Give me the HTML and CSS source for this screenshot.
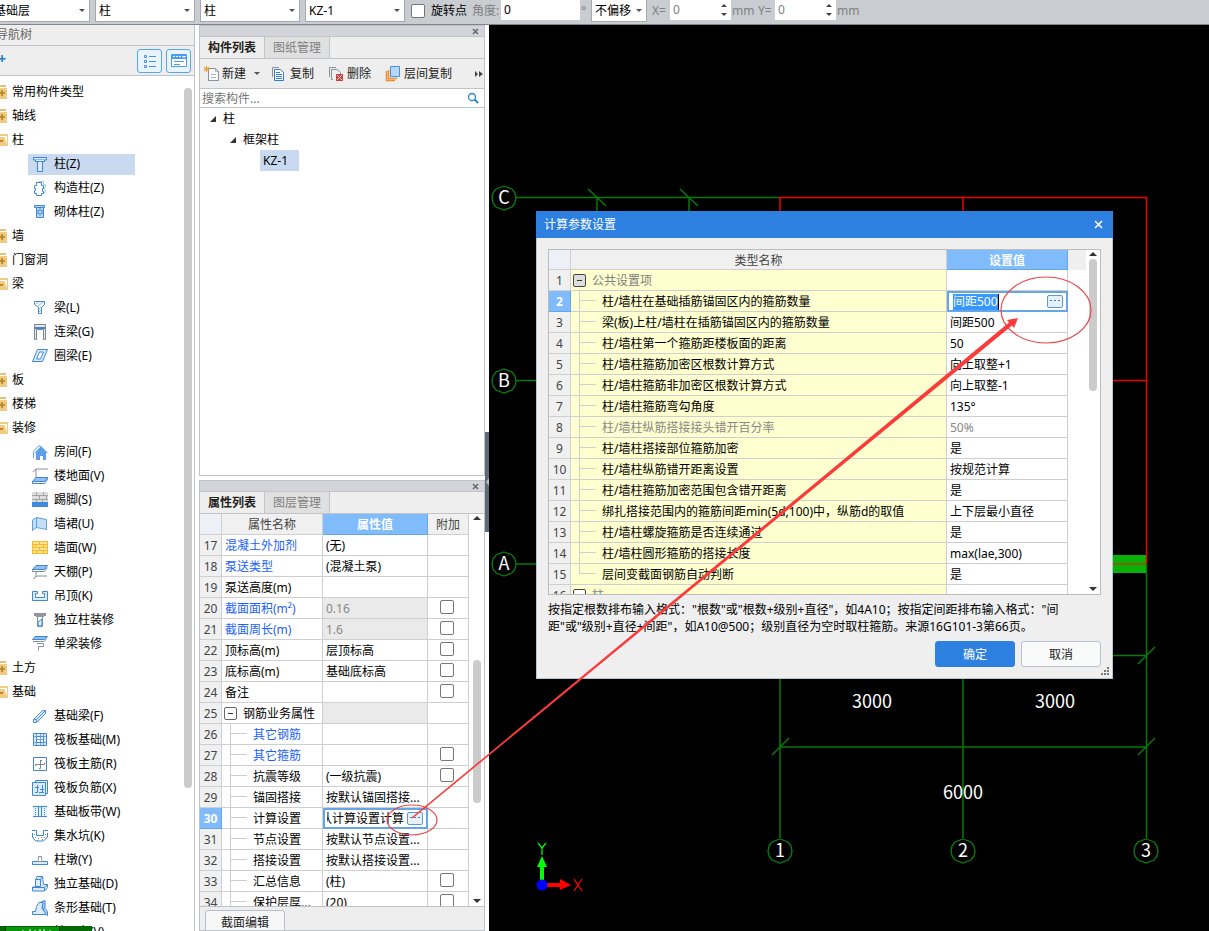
FILE: index.html
```html
<!DOCTYPE html>
<html lang="zh-CN">
<head>
<meta charset="utf-8">
<title>计算参数设置</title>
<link rel="stylesheet" href="styles.css">
</head>
<body>
<svg class="defs" aria-hidden="true">
  <symbol id="folder" viewBox="0 0 16 16"><path d="M1 1h13v2H1z" fill="#e8c078"/><path d="M1 4h14v11H1z" fill="#f0cb80"/><path d="M10 6v6M7 9h6" stroke="#bb8c35" stroke-width="2"/></symbol>
  <symbol id="folder-open" viewBox="0 0 16 16"><path d="M1 2h15v12H1z" fill="#f0cb80"/><path d="M8 4h7v8L12.500 5H8z" fill="#fff"/><path d="M8 9h3" stroke="#bb8c35" stroke-width="2"/></symbol>
  <symbol id="i-col" viewBox="0 0 16 16"><g fill="#dcebfb" stroke="#3f86d4"><path d="M1.500 1.500h13v2.500h-13z"/><path d="M3.500 4v1.500h9V4"/><path d="M5.500 5.500h5v10h-5z"/></g></symbol>
  <symbol id="i-gz" viewBox="0 0 16 16"><path d="M6.500 1.500h5v3h2v3h-1v3h1v2h-3" fill="none" stroke="#a9c9ec"/><path d="M4.500 2.500h5v3h2v3h-1v3h1v2h-2v2h-5v-2h-2v-3h1v-2h-1v-3h2z" fill="#fff" stroke="#3f86d4"/></symbol>
  <symbol id="i-qt" viewBox="0 0 16 16"><path d="M2.500 1.500h10v2h-10z" fill="#b9d7f5" stroke="#3f86d4"/><path d="M4.500 3.500h7v10h-7z" fill="#b9d7f5" stroke="#3f86d4"/><path d="M5 6.500h6M5 9.500h6M8 4v2M6 7v2M10 7v2M8 10v2" stroke="#5f9ddd"/></symbol>
  <symbol id="i-beam" viewBox="0 0 16 16"><path d="M2.500 1.500h10v3l-3 3v6h-3v-6l-4-3z" fill="#fff" stroke="#3f86d4"/><path d="M4 4l3-2M6 6l5-4M7 9l2-2M7 12l2-2" stroke="#8db8e6"/></symbol>
  <symbol id="i-link" viewBox="0 0 16 16"><path d="M2.500.5h11v15h-2V5.500h-7v10h-2z" fill="#e4e7ea" stroke="#7d868e"/><path d="M3 3h10v2H3z" fill="#3f86d4"/></symbol>
  <symbol id="i-ring" viewBox="0 0 16 16"><path d="M5.500 1.500h10l-5 12H.5zM7.500 4h4l-3 7h-4z" fill="#dcebfb" fill-rule="evenodd" stroke="#3f86d4"/></symbol>
  <symbol id="i-house" viewBox="0 0 16 16"><path d="M1.500 14V7.500L7 1.500l2 1" fill="none" stroke="#62a2ea"/><path d="M9 2l7 7h-2v7h-3v-4H8v4H4V9H2.500z" fill="#5e9fea"/></symbol>
  <symbol id="i-floor" viewBox="0 0 16 16"><path d="M1 4l3-3h12M4 1v9" fill="none" stroke="#85909a"/><path d="M4 9.500h11.500l-3 4H.5z" fill="#8fbff5" stroke="#3f86d4"/><path d="M.5 13.500v2h12l3-4v-2" fill="none" stroke="#3f86d4"/></symbol>
  <symbol id="i-skirt" viewBox="0 0 16 16"><path d="M0 0h16v10H0z" fill="#dddddf"/><path d="M0 3.500h16M0 7.500h16M4.500 0v3M11.500 0v3M7.500 4v3M14.500 4v3M4.500 8v2M10.500 8v2" stroke="#a3a5a9"/><path d="M0 10h16v5H0z" fill="#3e8adb"/></symbol>
  <symbol id="i-dado" viewBox="0 0 16 16"><path d="M4.500 1.500l10 2v10l-10-2-4 3V4z" fill="#c4def8" stroke="#5e9de2"/><path d="M4.500 1.500v10" stroke="#5e9de2"/></symbol>
  <symbol id="i-wall" viewBox="0 0 16 16"><path d="M0 1h16v13H0z" fill="#ffb81f"/><path d="M1 2h6v2H1zM8 2h7v2H8zM1 5h2v2H1zM4 5h7v2H4zM12 5h3v2h-3zM1 8h6v2H1zM8 8h7v2H8zM1 11h3v2H1zM5 11h6v2H5zM12 11h3v2h-3z" fill="#ffe49c"/></symbol>
  <symbol id="i-ceil" viewBox="0 0 16 16"><path d="M4 1.500h11.500l-3 4H.5z" fill="#8fbff5" stroke="#3f86d4"/><path d="M.5 5.500v2h12l3-4M1 15l4-3h10M4 7v6" fill="none" stroke="#85909a"/></symbol>
  <symbol id="i-susp" viewBox="0 0 16 16"><path d="M.5 3.500h5v2h-2v4h9v-4h-2v-2h5v9H.5z" fill="#dcebfb" stroke="#3f86d4"/></symbol>
  <symbol id="i-cdec" viewBox="0 0 16 16"><path d="M2 1h12v3H2zM4 4h8v1H4z" fill="#8e979f"/><path d="M5.500 5v9.500h5V5" fill="#fff" stroke="#85909a"/><path d="M6 10l4-3v7H6z" fill="#e2effc" stroke="#3f86d4"/></symbol>
  <symbol id="i-bdec" viewBox="0 0 16 16"><path d="M3 .5h12.500l-3 3H.5z" fill="#8fbff5" stroke="#3f86d4"/><path d="M1 5.500h11l3-3M5 7.500h6.500v3h-5v4" fill="none" stroke="#85909a"/></symbol>
  <symbol id="i-fbeam" viewBox="0 0 16 16"><path d="M1.500 11.500l9-9h3v3l-9 9h-3zM1.500 11.500h3v3M4.500 11.500l9-9" fill="#dcebfb" stroke="#4b8fdc"/></symbol>
  <symbol id="i-raft" viewBox="0 0 16 16"><path d="M1.500 1.500h13v12h-13z" fill="#dcebfb" stroke="#3f86d4"/><path d="M4.500 4.500h7v6h-7z" fill="#fff" stroke="#3f86d4"/><path d="M4.500 2v2M8.500 2v8M11.500 2v2M4.500 11v2M8.500 11v2M11.500 11v2M2 4.500h2M2 10.500h2M12 4.500h2M12 10.500h2M5 7.500h6" stroke="#6aa3e0"/></symbol>
  <symbol id="i-main" viewBox="0 0 16 16"><path d="M1.500 1.500h13v13h-13z" fill="#fff" stroke="#3f86d4"/><path d="M3.500 10V8.500h9V7M8.500 4v8.500H7M8.500 4.500H10" fill="none" stroke="#7d868e"/></symbol>
  <symbol id="i-neg" viewBox="0 0 16 16"><path d="M3.500 2.500v-2h12v13h-2M.5 2.500h13v13H.5z" fill="#dcebfb" stroke="#3f86d4"/><path d="M3 7.500h4M5.500 5v7.500H3M8 9.500h4M10.500 5v7.500M7 12.500h5" fill="none" stroke="#3f86d4"/></symbol>
  <symbol id="i-strip" viewBox="0 0 16 16"><path d="M1 2h14v11H1z" fill="#e2effc"/><path d="M1 2.500h14M1 12.500h14M6.500 2v11M9.500 2v11" stroke="#3f86d4"/><path d="M3.500 4v8M12.500 4v8" stroke="#3f86d4" stroke-dasharray="1 1"/></symbol>
  <symbol id="i-pit" viewBox="0 0 16 16"><path d="M0 2.500h4.500v5h7v-5H16M.5 5v4l3 4h8l4-4V5" fill="none" stroke="#3f86d4"/><path d="M2 6.500h1M3 9.500h1M6 10.500h1M9 9.500h1M12 9.500h1M13 6.500h1M5 12.500h1M10 11.500h1" stroke="#7d868e"/></symbol>
  <symbol id="i-pier" viewBox="0 0 16 16"><path d="M.5 9.500h15v3H.5z" fill="#dcebfb" stroke="#3f86d4"/><path d="M5.500 9.500l1-2v-3h3v3l1 2z" fill="#fff" stroke="#85909a"/></symbol>
  <symbol id="i-indf" viewBox="0 0 16 16"><path d="M5 .500h5.500l1 8h4v3l-3 3.500H.5v-4h3v-7z" fill="#dcebfb" stroke="#3f86d4"/><path d="M3.500 3.500h5v7h-5zM.5 11.500h12v3M12.500 11.500l3-3M8.500 3.500l2-3" fill="none" stroke="#3f86d4"/></symbol>
  <symbol id="i-strf" viewBox="0 0 16 16"><path d="M9 2l4-1.500v8l2.500 3v4l-3-2z" fill="#a9cdf3" stroke="#3f86d4"/><path d="M4.500 6.500L7 2.500h4l-1 6 3 4v2H.5v-3h3z" fill="#dcebfb" stroke="#3f86d4"/></symbol>
  <symbol id="i-pile" viewBox="0 0 16 16"><path d="M3.500 6.500l4-4 4 4v4h-8z" fill="#dcebfb" stroke="#3f86d4"/></symbol>
</svg>

<header class="bar">
  <span class="pick first"><select aria-label="楼层"><option>基础层</option></select></span>
  <span class="pick"><select aria-label="分类"><option>柱</option></select></span>
  <span class="pick"><select aria-label="构件类型"><option>柱</option></select></span>
  <span class="pick"><select aria-label="构件"><option>KZ-1</option></select></span>
  <label class="rot"><input type="checkbox" class="check">旋转点</label>
  <label class="fade la" for="angle">角度:</label><input id="angle" class="angle" value="0"><span class="fade deg">°</span>
  <span class="pick small"><select aria-label="偏移"><option>不偏移</option></select></span>
  <label class="fade lx" for="dx">X=</label><span class="spin"><input id="dx" value="0"></span><span class="fade unit">mm</span>
  <label class="fade ly" for="dy">Y=</label><span class="spin"><input id="dy" value="0"></span><span class="fade unit">mm</span>
</header>

<main class="main">
  <nav class="nav">
    <h2 class="nav-title">导航树</h2>
    <div class="nav-tools">
      <span class="plus">+</span>
      <button aria-label="列表"><svg width="16" height="16" fill="none" stroke="#4a90e2"><path d="M2.500 2.500h2v2h-2zM2.500 7.500h2v2h-2zM2.500 12.500h2v2h-2zM7 3.500h7M7 8.500h7M7 13.500h7"/></svg></button>
      <button aria-label="窗口"><svg width="16" height="16"><path d="M.5 1.500h15v12H.5z" fill="#fff" stroke="#4a9cf3"/><path d="M1 2h14v4H1z" fill="#4a9cf3"/><path d="M2 3.500h2M5 3.500h2M8 3.500h2" stroke="#fff"/><path d="M11 3h4l-2 2z" fill="#fff"/><path d="M3 8.500h10M3 11.500h6" stroke="#4a9cf3"/></svg></button>
    </div>
    <div class="nav-body">
      <ul class="tree">
        <li class="g"><svg><use href="#folder"/></svg>常用构件类型</li>
        <li class="g"><svg><use href="#folder"/></svg>轴线</li>
        <li class="g"><svg><use href="#folder-open"/></svg>柱</li>
        <li class="sel"><span><svg><use href="#i-col"/></svg>柱(Z)</span></li>
        <li><svg><use href="#i-gz"/></svg>构造柱(Z)</li>
        <li><svg><use href="#i-qt"/></svg>砌体柱(Z)</li>
        <li class="g"><svg><use href="#folder"/></svg>墙</li>
        <li class="g"><svg><use href="#folder"/></svg>门窗洞</li>
        <li class="g"><svg><use href="#folder-open"/></svg>梁</li>
        <li><svg><use href="#i-beam"/></svg>梁(L)</li>
        <li><svg><use href="#i-link"/></svg>连梁(G)</li>
        <li><svg><use href="#i-ring"/></svg>圈梁(E)</li>
        <li class="g"><svg><use href="#folder"/></svg>板</li>
        <li class="g"><svg><use href="#folder"/></svg>楼梯</li>
        <li class="g"><svg><use href="#folder-open"/></svg>装修</li>
        <li><svg><use href="#i-house"/></svg>房间(F)</li>
        <li><svg><use href="#i-floor"/></svg>楼地面(V)</li>
        <li><svg><use href="#i-skirt"/></svg>踢脚(S)</li>
        <li><svg><use href="#i-dado"/></svg>墙裙(U)</li>
        <li><svg><use href="#i-wall"/></svg>墙面(W)</li>
        <li><svg><use href="#i-ceil"/></svg>天棚(P)</li>
        <li><svg><use href="#i-susp"/></svg>吊顶(K)</li>
        <li><svg><use href="#i-cdec"/></svg>独立柱装修</li>
        <li><svg><use href="#i-bdec"/></svg>单梁装修</li>
        <li class="g"><svg><use href="#folder"/></svg>土方</li>
        <li class="g"><svg><use href="#folder-open"/></svg>基础</li>
        <li><svg><use href="#i-fbeam"/></svg>基础梁(F)</li>
        <li><svg><use href="#i-raft"/></svg>筏板基础(M)</li>
        <li><svg><use href="#i-main"/></svg>筏板主筋(R)</li>
        <li><svg><use href="#i-neg"/></svg>筏板负筋(X)</li>
        <li><svg><use href="#i-strip"/></svg>基础板带(W)</li>
        <li><svg><use href="#i-pit"/></svg>集水坑(K)</li>
        <li><svg><use href="#i-pier"/></svg>柱墩(Y)</li>
        <li><svg><use href="#i-indf"/></svg>独立基础(D)</li>
        <li><svg><use href="#i-strf"/></svg>条形基础(T)</li>
        <li><svg><use href="#i-pile"/></svg>桩承台(V)</li>
      </ul>
      <div class="nav-scroll"><i></i></div>
    </div>
    <svg class="meter" width="92" height="5"><path d="M0 0h92v5H0z" fill="#046804"/><path d="M6 1h53v4H6z" fill="#0a960a"/><path d="M5.500 0v5M59.500 0v5" stroke="#023a02"/><path d="M23 4v1M30 3v2M35 4v1M40 3v2M44 3v2M50 4v1" stroke="#e8ffe8"/></svg>
  </nav>

  <section class="dock">
    <div class="panel">
      <div class="grip"><button class="x" aria-label="关闭"><svg width="7" height="7"><path d="M1 1l5 5M6 1L1 6" stroke="#666" stroke-width="1.500"/></svg></button></div>
      <div class="tabs"><button class="on">构件列表</button><button>图纸管理</button></div>
      <div class="tools">
        <button class="new"><svg width="16" height="16"><path d="M4.500 2.500h7l3 3v9h-10z" fill="#f6f8fa" stroke="#87919b"/><path d="M11.500 2.500v3h3M7 8.500h5M7 11.500h5" fill="none" stroke="#a9b1b8"/><path d="M0 1l5 4M5 1L0 5M2.500 0v6M0 3h6" stroke="#f29a2e"/></svg>新建<i class="down"></i></button>
        <button class="copy"><svg width="16" height="16"><path d="M1.500 11V1.500H8" fill="none" stroke="#87919b"/><path d="M3.500 3.500h6l3 3v8h-9z" fill="#fff" stroke="#2e7bd1"/><path d="M5 6.500h4M5 8.500h6M5 10.500h6M5 12.500h6" stroke="#2e7bd1"/></svg>复制</button>
        <button class="del"><svg width="16" height="16"><path d="M1.500 11V1.500H8M5 13.500H3.500v-10h6l3 3V8" fill="none" stroke="#87919b"/><path d="M8 8h7v7H8z" fill="#c94040"/><path d="M9 9l5 5M14 9l-5 5" stroke="#f3d0d0"/></svg>删除</button>
        <button class="lay"><svg width="16" height="16"><path d="M1.500 5v9.500H10M3.500 4v8.500H12" fill="none" stroke="#f08a2c" stroke-width="1.500"/><path d="M5.500.5h9v10h-9z" fill="#b5d7fb" stroke="#4a90e2"/></svg>层间复制</button>
        <svg class="more" width="8" height="6"><path d="M0 0l3 3-3 3zM4 0l4 3-4 3z" fill="#444"/></svg>
      </div>
      <div class="search"><input aria-label="搜索构件" placeholder="搜索构件..."><svg width="12" height="12"><circle cx="5" cy="5" r="3.500" fill="none" stroke="#2b86c5" stroke-width="1.300"/><path d="M7.500 7.500l3.500 3.500" stroke="#2b86c5" stroke-width="2"/></svg></div>
      <ul class="parts">
        <li class="l1"><i></i>柱</li>
        <li class="l2"><i></i>框架柱</li>
        <li class="l3"><span>KZ-1</span></li>
      </ul>
    </div>

    <div class="panel props">
      <div class="grip"><button class="x" aria-label="关闭"><svg width="7" height="7"><path d="M1 1l5 5M6 1L1 6" stroke="#666" stroke-width="1.500"/></svg></button></div>
      <div class="tabs"><button class="on">属性列表</button><button>图层管理</button></div>
      <div class="grid">
        <table class="tbl">
          <colgroup><col class="c-n"><col class="c-name"><col class="c-val"><col class="c-add"></colgroup>
          <thead><tr><th class="corner"></th><th>属性名称</th><th class="hot">属性值</th><th>附加</th></tr></thead>
          <tbody>
            <tr><th>17</th><td class="blue">混凝土外加剂</td><td>(无)</td><td></td></tr>
            <tr><th>18</th><td class="blue">泵送类型</td><td>(混凝土泵)</td><td></td></tr>
            <tr><th>19</th><td>泵送高度(m)</td><td></td><td></td></tr>
            <tr><th>20</th><td class="blue">截面面积(m²)</td><td class="off">0.16</td><td class="ck"><input type="checkbox" class="check" aria-label="附加"></td></tr>
            <tr><th>21</th><td class="blue">截面周长(m)</td><td class="off">1.6</td><td class="ck"><input type="checkbox" class="check" aria-label="附加"></td></tr>
            <tr><th>22</th><td>顶标高(m)</td><td>层顶标高</td><td class="ck"><input type="checkbox" class="check" aria-label="附加"></td></tr>
            <tr><th>23</th><td>底标高(m)</td><td>基础底标高</td><td class="ck"><input type="checkbox" class="check" aria-label="附加"></td></tr>
            <tr><th>24</th><td>备注</td><td></td><td class="ck"><input type="checkbox" class="check" aria-label="附加"></td></tr>
            <tr><th>25</th><td class="grp"><button class="fold" aria-label="折叠"></button>钢筋业务属性</td><td class="off"></td><td></td></tr>
            <tr><th>26</th><td class="kid blue">其它钢筋</td><td></td><td></td></tr>
            <tr><th>27</th><td class="kid blue">其它箍筋</td><td></td><td class="ck"><input type="checkbox" class="check" aria-label="附加"></td></tr>
            <tr><th>28</th><td class="kid">抗震等级</td><td>(一级抗震)</td><td class="ck"><input type="checkbox" class="check" aria-label="附加"></td></tr>
            <tr><th>29</th><td class="kid">锚固搭接</td><td>按默认锚固搭接...</td><td></td></tr>
            <tr><th class="hot">30</th><td class="kid">计算设置</td><td class="edit"><div><input class="tail" aria-label="计算设置" value="按默认计算设置计算"><button class="dots" aria-label="更多"></button></div></td><td></td></tr>
            <tr><th>31</th><td class="kid">节点设置</td><td>按默认节点设置...</td><td></td></tr>
            <tr><th>32</th><td class="kid">搭接设置</td><td>按默认搭接设置...</td><td></td></tr>
            <tr><th>33</th><td class="kid">汇总信息</td><td>(柱)</td><td class="ck"><input type="checkbox" class="check" aria-label="附加"></td></tr>
            <tr><th>34</th><td class="kid">保护层厚...</td><td>(20)</td><td class="ck"><input type="checkbox" class="check" aria-label="附加"></td></tr>
          </tbody>
        </table>
        <div class="scroll"><b class="up"></b><i></i><b class="dn"></b></div>
      </div>
      <div class="foot"><button>截面编辑</button></div>
    </div>
  </section>

  <div class="split"><svg width="4" height="100"><path d="M0 0h4v100H0z" fill="#5f6a77"/><path d="M4 46v8L1 50z" fill="#b8c0c8"/></svg></div>

  <section class="canvas">
    <svg class="cad" width="720" height="906" viewBox="489 25 720 906">
      <g fill="none" stroke="#067a06" stroke-width="1.500">
        <path d="M516 197.500H780M597 197v16M689 197v16M516 380.500h22M516 564h22M780 678v160M963 678v160M1146.500 564v274M1112 655.500h34M780 747h366M588 189l18 17M680 189l18 17M772 755l17-17M1138 755l17-17M1138 664l17-17"/>
      </g>
      <path d="M1112 555h34v18h-34z" fill="#08b008"/>
      <path d="M1112 564h34" stroke="#a34a0c" stroke-width="1.500"/>
      <path d="M780 213v-15.500h366.500V564M963 197v16M1112 380.500h34" fill="none" stroke="#f00000" stroke-width="1.500"/>
      <g fill="none" stroke="#0a7d0a" stroke-width="1.300">
        <path id="ring" d="M504 186l8 3 3 4 1 5-1 5-3 4-8 3-8-3-3-4-1-5 1-5 3-4z"/>
        <use href="#ring" y="183"/><use href="#ring" y="366"/>
        <use href="#ring" x="276" y="653"/><use href="#ring" x="459" y="653"/><use href="#ring" x="642" y="653"/>
      </g>
      <g class="dims">
        <text x="504" y="204">C</text><text x="504" y="387">B</text><text x="504" y="570">A</text>
        <text x="780" y="857">1</text><text x="963" y="857">2</text><text x="1146" y="857">3</text>
        <text x="872" y="708">3000</text><text x="1055" y="708">3000</text><text x="963" y="799">6000</text>
      </g>
      <path d="M540 881v-14h-3l5-11 5 11h-3v14z" fill="#0f0"/>
      <path d="M546 883h14v-4l11 6-11 5v-3h-14z" fill="#f00"/>
      <circle cx="542" cy="885" r="5.500" fill="#00f"/>
      <path d="M538 843l4 5 4-5M542 848v7" fill="none" stroke="#0f0" stroke-width="1.300"/>
      <path d="M574 879l8 12M582 879l-8 12" stroke="#f00" stroke-width="1.300"/>
    </svg>

    <div class="dialog" role="dialog" aria-labelledby="dlg-title">
      <div class="dlg-head"><h1 id="dlg-title">计算参数设置</h1><button aria-label="关闭"><svg width="9" height="9"><path d="M1 1l7 7M8 1L1 8" stroke="#fff" stroke-width="1.600"/></svg></button></div>
      <div class="dlg-body">
        <div class="frame">
          <table class="tbl calc">
            <colgroup><col class="c-n"><col><col class="c-set"></colgroup>
            <thead><tr><th class="corner"></th><th>类型名称</th><th class="hot">设置值</th></tr></thead>
            <tbody>
              <tr><th>1</th><td class="grp"><button class="fold" aria-label="折叠"></button>公共设置项</td><td></td></tr>
              <tr><th class="hot">2</th><td class="kid">柱/墙柱在基础插筋锚固区内的箍筋数量</td><td class="edit"><div><input class="marked" aria-label="设置值" value="间距500"><button class="dots" aria-label="更多"></button></div></td></tr>
              <tr><th>3</th><td class="kid">梁(板)上柱/墙柱在插筋锚固区内的箍筋数量</td><td>间距500</td></tr>
              <tr><th>4</th><td class="kid">柱/墙柱第一个箍筋距楼板面的距离</td><td>50</td></tr>
              <tr><th>5</th><td class="kid">柱/墙柱箍筋加密区根数计算方式</td><td>向上取整+1</td></tr>
              <tr><th>6</th><td class="kid">柱/墙柱箍筋非加密区根数计算方式</td><td>向上取整-1</td></tr>
              <tr><th>7</th><td class="kid">柱/墙柱箍筋弯勾角度</td><td>135°</td></tr>
              <tr class="dim"><th>8</th><td class="kid">柱/墙柱纵筋搭接接头错开百分率</td><td>50%</td></tr>
              <tr><th>9</th><td class="kid">柱/墙柱搭接部位箍筋加密</td><td>是</td></tr>
              <tr><th>10</th><td class="kid">柱/墙柱纵筋错开距离设置</td><td>按规范计算</td></tr>
              <tr><th>11</th><td class="kid">柱/墙柱箍筋加密范围包含错开距离</td><td>是</td></tr>
              <tr><th>12</th><td class="kid">绑扎搭接范围内的箍筋间距min(5d,100)中，纵筋d的取值</td><td>上下层最小直径</td></tr>
              <tr><th>13</th><td class="kid">柱/墙柱螺旋箍筋是否连续通过</td><td>是</td></tr>
              <tr><th>14</th><td class="kid">柱/墙柱圆形箍筋的搭接长度</td><td>max(lae,300)</td></tr>
              <tr><th>15</th><td class="kid last">层间变截面钢筋自动判断</td><td>是</td></tr>
              <tr><th>16</th><td class="grp"><button class="fold plain" aria-label="折叠"></button>柱</td><td></td></tr>
            </tbody>
          </table>
          <div class="pad"></div>
          <div class="scroll"><b class="up"></b><i></i><b class="dn"></b></div>
        </div>
        <p class="hint">按指定根数排布输入格式："根数"或"根数+级别+直径"，如4A10；按指定间距排布输入格式："间<br>距"或"级别+直径+间距"，如A10@500；级别直径为空时取柱箍筋。来源16G101-3第66页。</p>
        <div class="acts"><button class="ok">确定</button><button>取消</button></div>
      </div>
      <svg class="size" width="9" height="9"><path d="M6 0h2v2H6zM3 3h2v2H3zM6 3h2v2H6zM0 6h2v2H0zM3 6h2v2H3zM6 6h2v2H6z" fill="#777"/></svg>
    </div>
  </section>
</main>

<svg class="ink" width="1209" height="931" aria-hidden="true">
  <g fill="none" stroke="#e8474b" stroke-width="1.200"><ellipse cx="1046" cy="310" rx="45" ry="33"/><ellipse cx="412" cy="820" rx="25" ry="15"/></g>
  <path d="M411.500 817.500L1009 322.500l-2-2.500 11-2-4 10-2-2.500L412.500 818.500z" fill="#fb3a3a"/>
</svg>
</body>
</html>
```
FILE: styles.css
```css
* { box-sizing: border-box; }

body {
  margin: 0;
  height: 100vh;
  display: flex;
  flex-direction: column;
  overflow: hidden;
  position: relative;
  background: #fff;
  color: #000;
  font: 12px/20px "Noto Sans", "Noto Sans CJK SC", sans-serif;
}

h1, h2, p, ul { margin: 0; padding: 0; font-weight: normal; }
ul { list-style: none; }
svg { flex: none; display: block; }
button, input, select {
  font: inherit;
  color: inherit;
  margin: 0;
  padding: 0;
  border: 0;
  background: none;
  border-radius: 0;
  outline: 0;
}
.defs { position: absolute; width: 0; height: 0; }

/* top bar */
.bar {
  flex: none;
  height: 25px;
  display: flex;
  align-items: flex-start;
  background: #c9ccd1;
  border-bottom: 1px solid #7f868d;
  white-space: nowrap;
}
.pick {
  position: relative;
  flex: none;
  width: 100px;
  height: 22px;
  margin-right: 5px;
  background: #fff;
  border: 1px solid #a5a8ad;
  border-top: 0;
}
.pick.first { margin-left: -10px; }
.pick.small { width: 56px; margin: 0; }
.pick select { appearance: none; width: 100%; height: 21px; padding: 0 3px; line-height: 21px; }
.pick::after {
  content: "";
  position: absolute;
  right: 4px;
  top: 9px;
  border: 3px solid transparent;
  border-top-color: #555;
  border-bottom: 0;
  pointer-events: none;
}
.check {
  appearance: none;
  width: 14px;
  height: 14px;
  border: 1px solid #777;
  border-radius: 2px;
  background: #fff;
}
.rot { display: flex; align-items: center; gap: 6px; margin: 0 5px 0 1px; line-height: 21px; }
.fade { color: #808080; line-height: 21px; }
.la { width: 29px; }
.angle { width: 79px; height: 20px; padding-left: 3px; background: #fff; }
.deg { width: 11px; padding-left: 1px; }
.lx { width: 23px; padding-left: 5px; }
.ly { width: 18px; padding-left: 1px; }
.unit { width: 26px; padding-left: 1px; }
.spin { position: relative; width: 61px; height: 20px; background: #fff; color: #808080; }
.spin input { width: 44px; height: 20px; padding-left: 3px; display: block; }
.spin::before, .spin::after {
  content: "";
  position: absolute;
  right: 4px;
  border: 3px solid transparent;
}
.spin::before { top: 4px; border-bottom-color: #444; border-top: 0; }
.spin::after { top: 13px; border-top-color: #444; border-bottom: 0; }

.main { flex: 1; min-height: 0; display: flex; }

/* navigation */
.nav {
  flex: none;
  width: 195px;
  display: flex;
  flex-direction: column;
  overflow: hidden;
  position: relative;
  border-right: 1px solid #c0c3c8;
}
.nav-title {
  height: 21px;
  background: #eee;
  border-bottom: 1px solid #c0c3c8;
  color: #666;
  font-size: 12px;
  text-indent: -4px;
}
.nav-tools {
  height: 30px;
  display: flex;
  align-items: center;
  gap: 4px;
  padding-right: 3px;
  background: #eee;
  border-bottom: 1px solid #c0c3c8;
}
.nav-tools .plus { margin: 0 auto 4px -2px; color: #1c78c8; font-size: 14px; font-weight: bold; }
.nav-tools button {
  width: 25px;
  height: 24px;
  display: grid;
  place-items: center;
  border: 1px solid #55a5f5;
  border-radius: 3px;
  background: #eaf4fe;
}
.nav-body { flex: 1; min-height: 0; display: flex; }
.tree { flex: 1; padding-top: 4px; }
.tree li { height: 24px; display: flex; align-items: center; padding-left: 32px; line-height: 24px; white-space: nowrap; }
.tree svg { width: 16px; height: 16px; margin-right: 6px; }
.tree .g { padding-left: 0; }
.tree .g svg { margin: 0 4px 0 -8px; }
.tree .sel { padding-left: 28px; }
.tree .sel span { width: 107px; height: 21px; padding-left: 4px; display: flex; align-items: center; background: #c9daf0; }
.nav-scroll { width: 10px; padding-top: 12px; }
.nav-scroll i { display: block; width: 8px; height: 700px; border-radius: 4px; background: #cbcbcb; }
.meter { position: absolute; left: 0; bottom: 0; }

/* docked panels */
.dock { flex: none; width: 286px; margin-left: 4px; display: flex; flex-direction: column; gap: 4px; }
.panel { flex: 1; min-height: 0; display: flex; flex-direction: column; border: 1px solid #c0c3c8; background: #fff; }
.grip { flex: none; height: 11px; display: flex; justify-content: flex-end; align-items: center; padding-right: 5px; background: #d3d5da; border-bottom: 1px solid #c0c3c8; }
.tabs { flex: none; height: 22px; display: flex; background: #eee; border-bottom: 1px solid #c0c3c8; }
.tabs button { width: 65px; border-right: 1px solid #c0c3c8; background: #e0e0e0; color: #808080; line-height: 20px; }
.tabs .on { background: #eee; color: #222; font-weight: bold; }
.tools { flex: none; height: 30px; display: flex; align-items: center; padding-left: 4px; background: #eee; border-bottom: 1px solid #c0c3c8; white-space: nowrap; }
.tools button { display: flex; align-items: center; gap: 3px; color: #222; }
.tools .new { margin-right: 11px; gap: 2px; }
.tools .copy { margin-right: 14px; }
.tools .del { margin-right: 14px; }
.tools .more { margin: 0 1px 0 auto; }
.tools .down { margin-left: 6px; border: 3px solid transparent; border-top-color: #555; border-bottom: 0; }
.search { flex: none; height: 19px; display: flex; align-items: center; padding: 0 5px 0 2px; border-bottom: 1px solid #c0c3c8; }
.search input { flex: 1; min-width: 0; height: 18px; padding-top: 2px; }
.search input::placeholder { color: #777; opacity: 1; }
.parts li { height: 21px; display: flex; align-items: center; }
.parts i { width: 0; border: 3px solid #333; border-top-color: transparent; border-left-color: transparent; margin-right: 7px; }
.parts .l1 { padding-left: 10px; }
.parts .l2 { padding-left: 30px; }
.parts .l3 { padding-left: 60px; }
.parts span { padding: 0 11px 0 3px; background: #c9daf0; line-height: 21px; }

/* data tables */
.grid { flex: 1; min-height: 0; display: flex; overflow: hidden; border-bottom: 1px solid #c0c3c8; }
.tbl { flex: none; align-self: flex-start; table-layout: fixed; border-spacing: 0; width: 269px; }
.c-n { width: 22px; }
.c-name { width: 101px; }
.c-val { width: 105px; }
.c-set { width: 121px; }
.tbl th, .tbl td {
  height: 21px;
  padding: 2px 0 0;
  border-right: 1px solid #cfcfcf;
  border-bottom: 1px solid #cfcfcf;
  line-height: 18px;
  font-weight: normal;
  white-space: nowrap;
  overflow: hidden;
}
.tbl th { background: #f0f0f0; color: #444; text-align: center; }
.tbl td { padding-left: 3px; text-align: left; }
.tbl .corner { background: #edf1f7; }
.tbl .hot { background: #80bbfb; border-color: #66a5e8; color: #fff; font-weight: bold; }
.tbl .blue { color: #1b5fff; }
.tbl .off { background-color: #eaeaea; color: #888; }
.tbl .ck { padding: 0 3px 0 0; text-align: center; }
.ck .check { display: block; margin: 0 auto 2px; }
.tbl .kid {
  padding-left: 31px;
  background-image: linear-gradient(#cfcfcf, #cfcfcf), linear-gradient(#cfcfcf, #cfcfcf);
  background-size: 1px 100%, 16px 1px;
  background-position: 8px 0, 9px 9px;
  background-repeat: no-repeat;
}
.tbl .kid.last { background-size: 1px 10px, 16px 1px; }
.tbl .grp { padding-left: 2px; }
.fold {
  width: 13px;
  height: 13px;
  margin-right: 6px;
  border: 1px solid #666;
  border-radius: 2px;
  vertical-align: -1px;
  background: linear-gradient(#333, #333) center / 5px 1px no-repeat #fff;
}
.tbl .edit { padding: 0; border: 0; }
.edit div { height: 21px; display: flex; align-items: center; justify-content: space-between; padding: 0 3px 0 2px; border: 2px solid #64a6e8; background: #fff; }
.dots {
  width: 16px;
  height: 13px;
  border: 1px solid #5b9bd5;
  border-radius: 2px;
  background: radial-gradient(circle, #3b84cc 1px, transparent 1px) 1px 0 / 4px 9px repeat-x #e6f1fb;
}
.tail { width: 77px; height: 17px; direction: rtl; }
.marked { width: 46px; height: 16px; margin-left: 2px; background: #3797ff; color: #fff; border-right: 1px solid #000; }
.calc { flex: 1; width: auto; }
.calc thead th { height: 20px; line-height: 17px; }
.calc td:nth-child(2) { background-color: #ffffcf; }
.calc .grp { color: #808080; }
.calc .fold { background-color: #ddd; border-color: #444; }
.calc .plain { background: #fff; }
.calc .dim td { color: #888; }
.scroll { flex: 1; display: flex; flex-direction: column; align-items: center; background: #fff; }
.scroll b { border: 4px solid transparent; }
.scroll .up { margin-top: 2px; border-top: 0; border-bottom-color: #333; }
.scroll .dn { margin: auto 0 3px; border-bottom: 0; border-top-color: #333; }
.scroll i { width: 8px; border-radius: 4px; background: #cbcbcb; }
.props .scroll i { height: 143px; margin-top: 140px; }
.foot { flex: none; height: 23px; padding: 3px 5px 0; background: #eee; overflow: hidden; }
.foot button { width: 80px; height: 26px; border: 1px solid #b9c0cc; border-radius: 3px; background: #f7f7f7; color: #222; }
.split { flex: none; width: 4px; padding-top: 8px; display: flex; align-items: center; }

/* drawing area */
.canvas { flex: 1; min-width: 0; position: relative; overflow: hidden; background: #000; }
.cad { position: absolute; left: 0; top: 0; }
.dims { fill: #fff; font-family: "Noto Sans CJK SC", sans-serif; font-size: 18px; text-anchor: middle; }

.dialog {
  position: absolute;
  left: 47px;
  top: 186px;
  width: 577px;
  border: 1px solid #b7c3d8;
  border-top: 0;
  background: #efefef;
}
.dlg-head { height: 27px; margin: 0 -1px; padding: 0 10px 0 8px; display: flex; align-items: center; justify-content: space-between; background: #2d7fe0; color: #fff; }
.dlg-head h1 { font-size: 12px; }
.dlg-head button { display: grid; }
.dlg-body { padding: 11px; }
.frame { height: 346px; display: flex; overflow: hidden; border: 1px solid #bcbcbc; background: #fff; }
.frame .pad { width: 18px; height: 20px; background: #efefef; }
.frame .scroll { flex: none; width: 14px; }
.frame .scroll i { height: 132px; margin-top: 3px; }
.hint { margin-top: 6px; line-height: 17px; white-space: nowrap; }
.acts { margin-top: 6px; display: flex; justify-content: flex-end; gap: 6px; }
.acts button { width: 80px; height: 26px; border: 1px solid #b9c0d0; border-radius: 3px; background: #fafafa; color: #222; padding-top: 1px; }
.acts .ok { background: #2d7fe0; border-color: #2d7fe0; color: #fff; }
.size { position: absolute; right: 2px; bottom: 2px; }

/* annotation strokes over the whole window */
.ink { position: absolute; left: 0; top: 0; pointer-events: none; }
```
